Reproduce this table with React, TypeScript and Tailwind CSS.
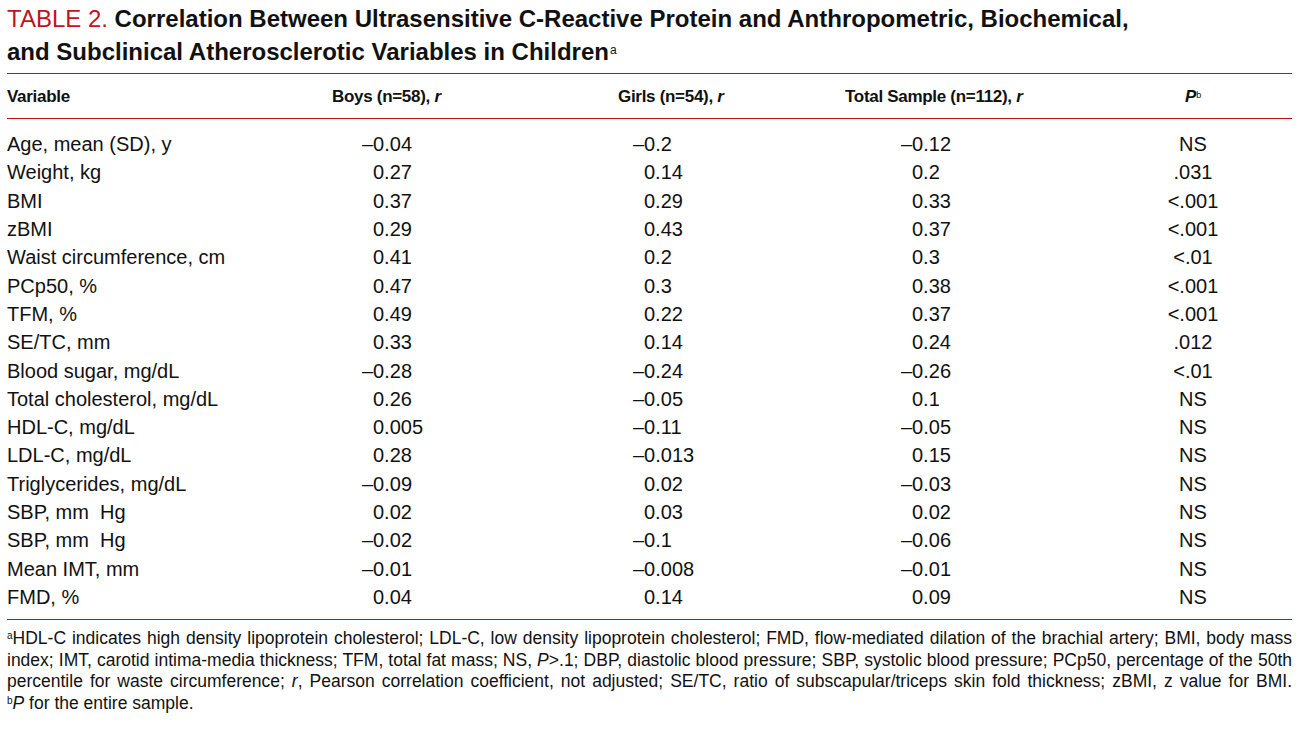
import type { ReactNode } from "react";

type Row = { label: string; boys: string; girls: string; total: string; p: string };

const ROWS: Row[] = [
  { label: "Age, mean (SD), y", boys: "–0.04", girls: "–0.2", total: "–0.12", p: "NS" },
  { label: "Weight, kg", boys: "0.27", girls: "0.14", total: "0.2", p: ".031" },
  { label: "BMI", boys: "0.37", girls: "0.29", total: "0.33", p: "<.001" },
  { label: "zBMI", boys: "0.29", girls: "0.43", total: "0.37", p: "<.001" },
  { label: "Waist circumference, cm", boys: "0.41", girls: "0.2", total: "0.3", p: "<.01" },
  { label: "PCp50, %", boys: "0.47", girls: "0.3", total: "0.38", p: "<.001" },
  { label: "TFM, %", boys: "0.49", girls: "0.22", total: "0.37", p: "<.001" },
  { label: "SE/TC, mm", boys: "0.33", girls: "0.14", total: "0.24", p: ".012" },
  { label: "Blood sugar, mg/dL", boys: "–0.28", girls: "–0.24", total: "–0.26", p: "<.01" },
  { label: "Total cholesterol, mg/dL", boys: "0.26", girls: "–0.05", total: "0.1", p: "NS" },
  { label: "HDL-C, mg/dL", boys: "0.005", girls: "–0.11", total: "–0.05", p: "NS" },
  { label: "LDL-C, mg/dL", boys: "0.28", girls: "–0.013", total: "0.15", p: "NS" },
  { label: "Triglycerides, mg/dL", boys: "–0.09", girls: "0.02", total: "–0.03", p: "NS" },
  { label: "SBP, mm  Hg", boys: "0.02", girls: "0.03", total: "0.02", p: "NS" },
  { label: "SBP, mm  Hg", boys: "–0.02", girls: "–0.1", total: "–0.06", p: "NS" },
  { label: "Mean IMT, mm", boys: "–0.01", girls: "–0.008", total: "–0.01", p: "NS" },
  { label: "FMD, %", boys: "0.04", girls: "0.14", total: "0.09", p: "NS" },
];

const GRID = "grid grid-cols-[300px_260px_250px_260px_1fr]";

// negative values hang their minus sign left of the digit column
function Num({ value, className }: { value: string; className: string }) {
  const neg = value.startsWith("–");
  return (
    <div className={className}>
      <span className={neg ? "-ml-[11px]" : ""}>{value}</span>
    </div>
  );
}

function Line({ children, last = false }: { children: ReactNode; last?: boolean }) {
  return (
    <p className={last ? "whitespace-nowrap" : "whitespace-nowrap text-justify [text-align-last:justify]"}>
      {children}
    </p>
  );
}

export default function App() {
  return (
    <div className="min-h-screen bg-white px-[7px] text-[#111] font-['Liberation_Sans',Arial,sans-serif]">
      <div className="w-[1285px]">
        <h1 className="pt-[2px] text-[24px] leading-[33px]">
          <span className="text-[#c0131f]">TABLE 2.</span>{" "}
          <span className="font-bold">
            Correlation Between Ultrasensitive C-Reactive Protein and Anthropometric, Biochemical,
            <br />
            and Subclinical Atherosclerotic Variables in Children
          </span>
          <sup className="ml-[1px] text-[12px] font-normal">a</sup>
        </h1>

        <div className="mt-[5px] border-t border-[#b5121b]" />

        <div className={`${GRID} h-[44px] items-center pt-[2px] text-[17px] font-bold tracking-[-0.3px]`}>
          <div>Variable</div>
          <div className="pl-[25px]">
            Boys (n=58), <i>r</i>
          </div>
          <div className="pl-[51px]">
            Girls (n=54), <i>r</i>
          </div>
          <div className="pl-[28px]">
            Total Sample (n=112), <i>r</i>
          </div>
          <div className="pl-[17px] text-center">
            <i>P</i>
            <sup className="text-[9px] font-normal">b</sup>
          </div>
        </div>

        <div className="border-t border-[#b5121b]" />

        <div className="pt-[11px] pb-[8px] text-[20px]">
          {ROWS.map((r, i) => (
            <div key={i} className={`${GRID} h-[28.3px] items-center leading-none`}>
              <div className="whitespace-pre">{r.label}</div>
              <Num value={r.boys} className="pl-[66px]" />
              <Num value={r.girls} className="pl-[77px]" />
              <Num value={r.total} className="pl-[95px]" />
              <div className="pl-[17px] text-center">{r.p}</div>
            </div>
          ))}
        </div>

        <div className="border-t border-[#b5121b]" />

        <div className="pt-[8px] text-[17.5px] leading-[21.7px]">
          <Line>
            <sup className="text-[10px]">a</sup>HDL-C indicates high density lipoprotein cholesterol; LDL-C, low density
            lipoprotein cholesterol; FMD, flow-mediated dilation of the brachial artery; BMI, body mass
          </Line>
          <Line>
            index; IMT, carotid intima-media thickness; TFM, total fat mass; NS, <i>P</i>&gt;.1; DBP, diastolic blood
            pressure; SBP, systolic blood pressure; PCp50, percentage of the 50th
          </Line>
          <Line>
            percentile for waste circumference; <i>r</i>, Pearson correlation coefficient, not adjusted; SE/TC, ratio of
            subscapular/triceps skin fold thickness; zBMI, z value for BMI.
          </Line>
          <Line last>
            <sup className="text-[10px]">b</sup>
            <i>P</i> for the entire sample.
          </Line>
        </div>
      </div>
    </div>
  );
}
